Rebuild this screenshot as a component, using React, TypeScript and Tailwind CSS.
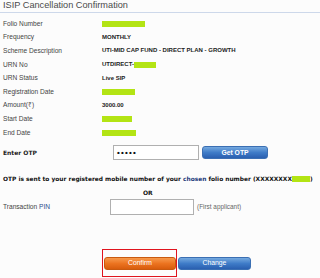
import React from "react";

const Green = ({ w }: { w: string }) => (
  <span className={`inline-block h-[6px] bg-[#b3e414] align-middle ${w}`} />
);

function Row({ label, children }: { label: React.ReactNode; children: React.ReactNode }) {
  return (
    <div className="flex h-[13.6px] items-center">
      <div className="w-[102px] shrink-0 pl-[3px] text-[6.6px] text-[#444]">{label}</div>
      <div className="flex items-center text-[6px] font-bold text-[#222]">{children}</div>
    </div>
  );
}

export default function App() {
  return (
    <div
      className="relative h-[278px] w-[320px] overflow-hidden bg-[#fcfcfc]"
      style={{ fontFamily: '"Liberation Sans", Arial, sans-serif' }}
    >
      <div className="flex h-[13px] items-center border-b border-[#cdd8ea] pl-[3px] text-[9.2px] leading-none text-[#4a4a4a]">
        ISIP Cancellation Confirmation
      </div>

      <div className="mt-[4px] flex flex-col">
        <Row label="Folio Number">
          <Green w="w-[43px]" />
        </Row>
        <Row label="Frequency">MONTHLY</Row>
        <Row label="Scheme Description">UTI-MID CAP FUND - DIRECT PLAN - GROWTH</Row>
        <Row label="URN No">
          <span>UTDIRECT-</span>
          <Green w="w-[22px]" />
        </Row>
        <Row label="URN Status">Live SIP</Row>
        <Row label="Registration Date">
          <Green w="w-[33px]" />
        </Row>
        <Row label="Amount(₹)">3000.00</Row>
        <Row label="Start Date">
          <Green w="w-[30px]" />
        </Row>
        <Row label="End Date">
          <Green w="w-[34px]" />
        </Row>
      </div>

      <div className="mt-[6px] flex h-[15px] items-center">
        <div className="w-[113px] shrink-0 pl-[3px] font-['DejaVu_Sans',sans-serif] text-[6px] font-bold text-[#222]">
          Enter OTP
        </div>
        <div className="flex h-[15px] w-[86px] items-center border border-[#b0b0b0] bg-white pl-[3px] text-[8px] font-bold tracking-[1.2px] text-[#111]">
          •••••
        </div>
        <button className="ml-[3px] h-[13px] w-[66px] rounded-[3px] border border-[#3b6fb3] bg-gradient-to-b from-[#75a9df] via-[#3f7cc8] to-[#2a5fb0] text-[6.8px] font-bold text-white">
          Get OTP
        </button>
      </div>

      <div className="mt-[14.5px] h-[8px] whitespace-nowrap pl-[3px] font-['DejaVu_Sans',sans-serif] text-[5.9px] font-bold leading-[8px] text-[#111]">
        OTP is sent to your registered mobile number of your{" "}
        <span className="text-[#1e3a7a]">chosen</span> folio number (XXXXXXXX
        <span className="inline-block h-[6px] w-[18px] bg-[#b3e414] align-middle" />)
      </div>

      <div className="mt-[6px] h-[8px] pl-[143px] font-['DejaVu_Sans',sans-serif] text-[6px] font-bold leading-[8px] text-[#111]">
        OR
      </div>

      <div className="mt-[2px] flex h-[16px] items-center">
        <div className="w-[110px] shrink-0 pl-[3px] text-[6.6px] text-[#444]">
          Transaction <span className="text-[#2a4a8a]">PIN</span>
        </div>
        <div className="h-[16px] w-[84px] border border-[#b0b0b0] bg-white" />
        <div className="ml-[3px] text-[6.4px] text-[#666]">(First applicant)</div>
      </div>

      <div className="mt-[42px] flex pl-[104px]">
        <button className="h-[13px] w-[72px] rounded-[3px] border border-[#c85a10] bg-gradient-to-b from-[#f7994a] via-[#ec7420] to-[#d85c0c] text-[6.8px] text-white">
          Confirm
        </button>
        <button className="ml-[2px] h-[13px] w-[73px] rounded-[3px] border border-[#3b6fb3] bg-gradient-to-b from-[#75a9df] via-[#3f7cc8] to-[#2a5fb0] text-[6.8px] text-white">
          Change
        </button>
      </div>

      <div className="absolute left-[102px] top-[249px] h-[28px] w-[75px] border border-[#e0141e]" />
    </div>
  );
}
